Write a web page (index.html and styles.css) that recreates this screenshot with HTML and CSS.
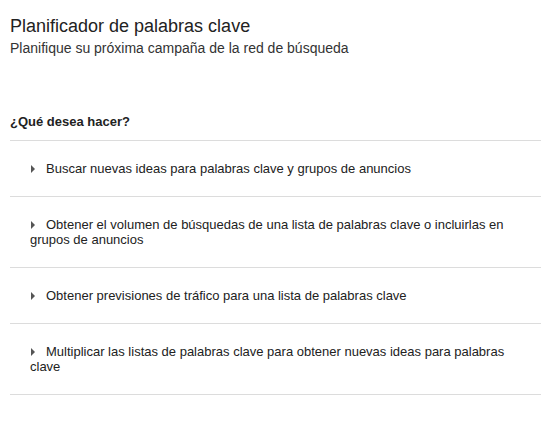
FILE: index.html
```html
<!DOCTYPE html>
<html lang="es">
<head>
<meta charset="utf-8">
<title>Planificador de palabras clave</title>
<link rel="stylesheet" href="styles.css">
</head>
<body>
<div class="page">
  <header class="page-header">
    <h1 class="title">Planificador de palabras clave</h1>
    <p class="subtitle">Planifique su próxima campaña de la red de búsqueda</p>
  </header>
  <section class="tasks">
    <h2 class="tasks-heading">¿Qué desea hacer?</h2>
    <ul class="task-list">
      <li class="task"><span class="caret"></span>Buscar nuevas ideas para palabras clave y grupos de anuncios</li>
      <li class="task"><span class="caret"></span>Obtener el volumen de búsquedas de una lista de palabras clave o incluirlas en grupos de anuncios</li>
      <li class="task"><span class="caret"></span>Obtener previsiones de tráfico para una lista de palabras clave</li>
      <li class="task"><span class="caret"></span>Multiplicar las listas de palabras clave para obtener nuevas ideas para palabras clave</li>
    </ul>
  </section>
</div>
</body>
</html>
```
FILE: styles.css
```css
html, body {
  margin: 0;
  padding: 0;
  background: #fff;
}

body {
  font-family: "Liberation Sans", Arial, sans-serif;
  color: #222;
}

.page {
  margin: 0 17px 0 10px;
  padding-top: 15px;
}

.title {
  margin: 0;
  font-size: 18px;
  font-weight: normal;
  line-height: 22px;
  color: #222;
}

.subtitle {
  margin: 3px 0 0;
  font-size: 14px;
  line-height: 17px;
  color: #333;
}

.tasks {
  margin-top: 57px;
}

.tasks-heading {
  margin: 0;
  font-size: 13px;
  font-weight: bold;
  line-height: 16px;
  padding-bottom: 10px;
  border-bottom: 1px solid #dcdcdc;
  color: #222;
}

.task-list {
  list-style: none;
  margin: 0;
  padding: 0;
}

.task {
  padding: 20px 34px 20px 20px;
  font-size: 13px;
  line-height: 15px;
  color: #222;
  border-bottom: 1px solid #dcdcdc;
}

.caret {
  display: inline-block;
  width: 0;
  height: 0;
  margin: 0 11px 1px 1px;
  border-top: 4px solid transparent;
  border-bottom: 4px solid transparent;
  border-left: 4px solid #555;
  vertical-align: middle;
}
```
